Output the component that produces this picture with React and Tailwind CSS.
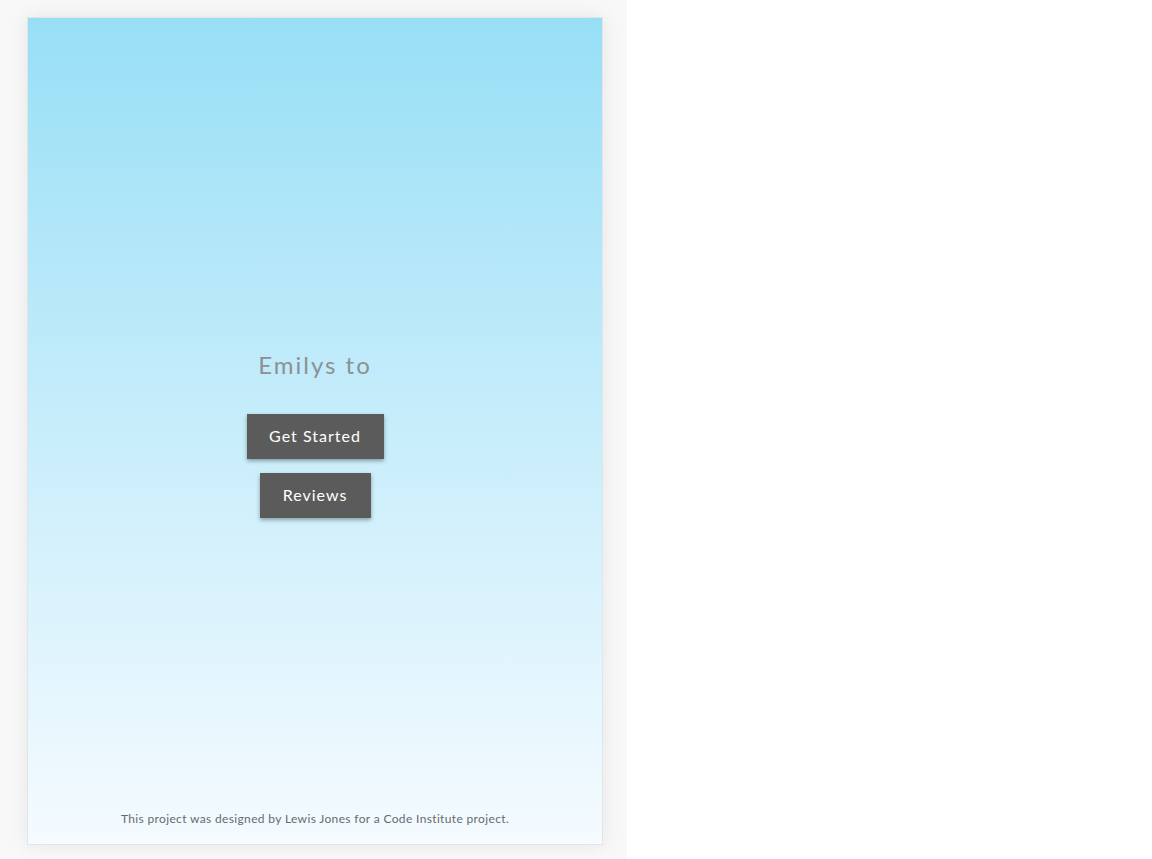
import React from 'react';

const App = () => {
  return (
    <div className="flex min-h-[859px] w-full bg-white" style={{ fontFamily: 'Lato, "Noto Sans", sans-serif' }}>
      {/* Left panel */}
      <div className="w-[627px] shrink-0 bg-[#f8f8f8] pl-[27px] pt-[17px] pb-[14px]">
        <div className="flex h-[828px] w-[576px] flex-col border border-[#e2e6e8] bg-gradient-to-b from-[#97dff6] to-[#f5fbff] shadow-[0_0_18px_rgba(0,0,0,0.08)]">
          <div className="flex flex-1 flex-col items-center justify-center pt-[36px]">
            <h1 className="text-[24px] tracking-[2px] text-[#8b9194]">Emilys to</h1>
            <button className="mt-[31px] h-[45px] w-[137px] bg-[#5b5b5b] text-[16px] tracking-[1px] text-white shadow-[0_2px_4px_rgba(0,0,0,0.35)]">
              Get Started
            </button>
            <button className="mt-[14px] h-[45px] w-[111px] bg-[#5b5b5b] text-[16px] tracking-[1px] text-white shadow-[0_2px_4px_rgba(0,0,0,0.35)]">
              Reviews
            </button>
          </div>
          <p className="pb-[16px] text-center text-[12px] tracking-[0.35px] text-[#666b6e]">
            This project was designed by Lewis Jones for a Code Institute project.
          </p>
        </div>
      </div>
      <div className="flex-1 bg-white" />
    </div>
  );
};

export default App;
